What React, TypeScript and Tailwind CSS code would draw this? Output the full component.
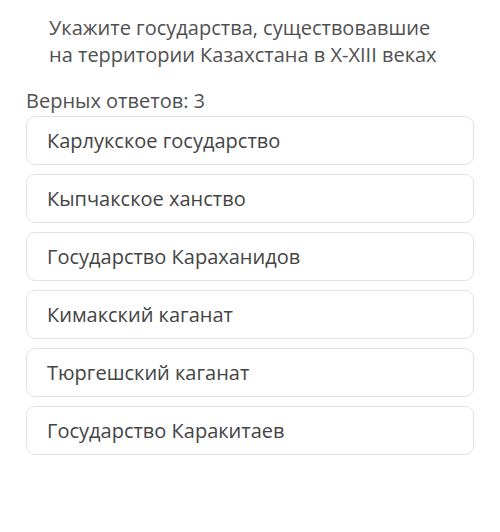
const OPTIONS = [
  'Карлукское государство',
  'Кыпчакское ханство',
  'Государство Караханидов',
  'Кимакский каганат',
  'Тюргешский каганат',
  'Государство Каракитаев',
];

export default function App() {
  return (
    <div
      className="h-[532px] w-[500px] bg-white text-[#444]"
      style={{ fontFamily: '"Open Sans", sans-serif' }}
    >
      <div className="px-[49px] pt-[14px] text-[20px] leading-[27px] text-[#505050]">
        Укажите государства, существовавшие
        <br />
        на территории Казахстана в X-XIII веках
      </div>
      <div className="px-[26px]">
        <div className="mt-[20px] text-[20px] leading-[26px] text-[#505050]">Верных ответов: 3</div>
        <div className="mt-[2px] flex flex-col gap-[9px]">
          {OPTIONS.map((o) => (
            <div
              key={o}
              className="flex h-[49px] items-center rounded-[9px] border border-[#e3e3e3] bg-white px-[20px] text-[20px]"
            >
              {o}
            </div>
          ))}
        </div>
      </div>
    </div>
  );
}
